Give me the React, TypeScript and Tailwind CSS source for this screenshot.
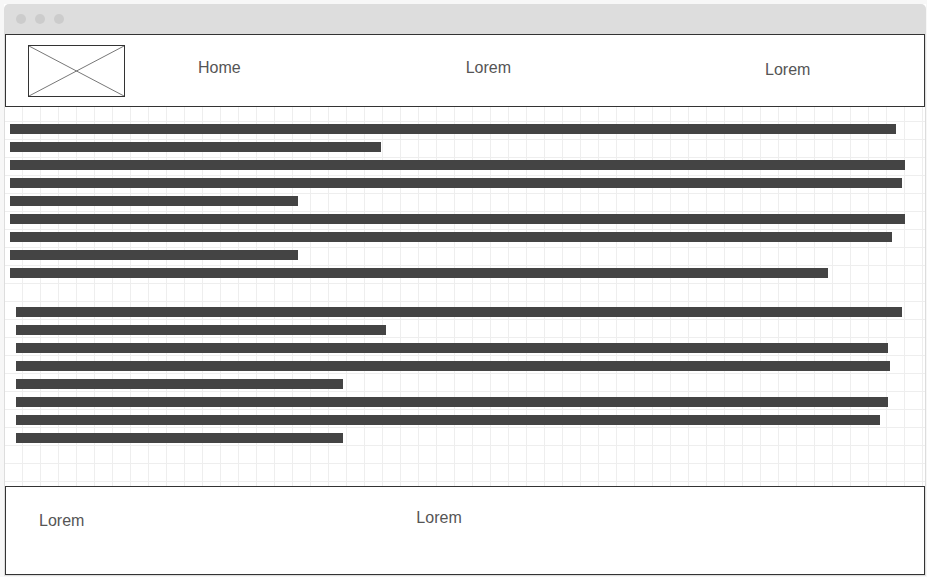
import React from "react";

const sec1 = [886, 371, 895, 892, 288, 895, 882, 288, 818];
const sec2 = [886, 370, 872, 874, 327, 872, 864, 327];

export default function App() {
  return (
    <div
      className="w-[927px] h-[577px] overflow-hidden bg-[#f7f7f7] pt-[4px] pl-[4px]"
      style={{ fontFamily: '"Liberation Sans", Arial, sans-serif' }}
    >
      <div className="w-[922px] h-[572px] flex flex-col bg-white">
        {/* title bar */}
        <div className="h-[30px] shrink-0 bg-[#dddddd] rounded-t-[5px] flex items-center pl-[12px] gap-[9px]">
          <div className="w-[10px] h-[10px] rounded-full bg-[#cccccc]" />
          <div className="w-[10px] h-[10px] rounded-full bg-[#cccccc]" />
          <div className="w-[10px] h-[10px] rounded-full bg-[#cccccc]" />
        </div>
        <div className="flex-1 flex flex-col border-l border-r border-b border-[#dddddd]">
          {/* header */}
          <div className="h-[73px] shrink-0 border border-[#333333] flex items-start bg-white">
            <div className="ml-[22px] mt-[10px] w-[97px] h-[52px] border border-[#333333] shrink-0">
              <svg width="95" height="50" viewBox="0 0 95 50" className="block">
                <line x1="0" y1="0" x2="95" y2="50" stroke="#777" strokeWidth="1" />
                <line x1="95" y1="0" x2="0" y2="50" stroke="#777" strokeWidth="1" />
              </svg>
            </div>
            <span className="ml-[73px] mt-[24px] text-[16px] leading-[18px] text-[#555555]">Home</span>
            <span className="ml-[225px] mt-[24px] text-[16px] leading-[18px] text-[#555555]">Lorem</span>
            <span className="ml-[254px] mt-[26px] text-[16px] leading-[18px] text-[#555555]">Lorem</span>
          </div>
          {/* content grid */}
          <div className="flex-1 bg-[linear-gradient(to_right,#eeeeee_1px,transparent_1px),linear-gradient(to_bottom,#eeeeee_1px,transparent_1px)] bg-[size:18px_18px] bg-[position:17px_14px] pt-[17px]">
            <div className="flex flex-col gap-[8px] pl-[5px]">
              {sec1.map((w, i) => (
                <div key={i} className="h-[10px] bg-[#444444]" style={{ width: w }} />
              ))}
            </div>
            <div className="flex flex-col gap-[8px] pl-[11px] mt-[29px]">
              {sec2.map((w, i) => (
                <div key={i} className="h-[10px] bg-[#444444]" style={{ width: w }} />
              ))}
            </div>
          </div>
          {/* footer */}
          <div className="h-[89px] shrink-0 border border-[#333333] bg-white flex items-start">
            <span className="ml-[33px] mt-[25px] text-[16px] leading-[18px] text-[#555555]">Lorem</span>
            <span className="ml-[332px] mt-[22px] text-[16px] leading-[18px] text-[#555555]">Lorem</span>
          </div>
        </div>
      </div>
    </div>
  );
}
